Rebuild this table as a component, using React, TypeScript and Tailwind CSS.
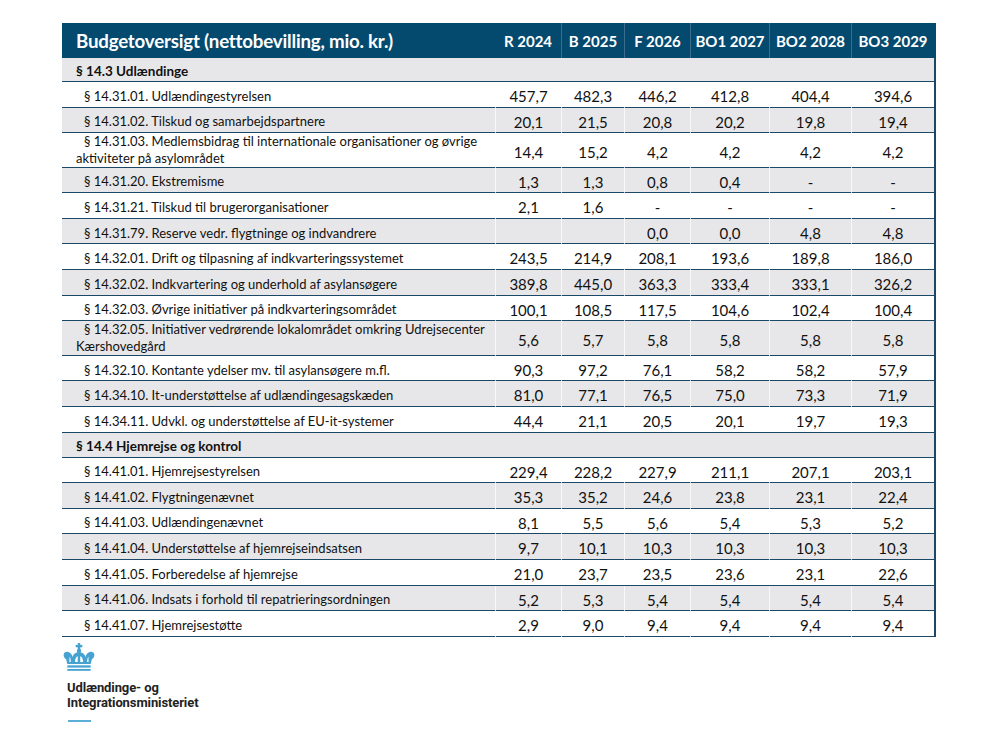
import React from 'react';

type Row =
  | { kind: 'section'; label: string }
  | { kind: 'item'; lines: string[]; values: string[] };

const rows: Row[] = [
  { kind: 'section', label: '§ 14.3 Udlændinge' },
  { kind: 'item', lines: ['§ 14.31.01. Udlændingestyrelsen'], values: ['457,7', '482,3', '446,2', '412,8', '404,4', '394,6'] },
  { kind: 'item', lines: ['§ 14.31.02. Tilskud og samarbejdspartnere'], values: ['20,1', '21,5', '20,8', '20,2', '19,8', '19,4'] },
  {
    kind: 'item',
    lines: ['§ 14.31.03. Medlemsbidrag til internationale organisationer og øvrige', 'aktiviteter på asylområdet'],
    values: ['14,4', '15,2', '4,2', '4,2', '4,2', '4,2'],
  },
  { kind: 'item', lines: ['§ 14.31.20. Ekstremisme'], values: ['1,3', '1,3', '0,8', '0,4', '-', '-'] },
  { kind: 'item', lines: ['§ 14.31.21. Tilskud til brugerorganisationer'], values: ['2,1', '1,6', '-', '-', '-', '-'] },
  { kind: 'item', lines: ['§ 14.31.79. Reserve vedr. flygtninge og indvandrere'], values: ['', '', '0,0', '0,0', '4,8', '4,8'] },
  { kind: 'item', lines: ['§ 14.32.01. Drift og tilpasning af indkvarteringssystemet'], values: ['243,5', '214,9', '208,1', '193,6', '189,8', '186,0'] },
  { kind: 'item', lines: ['§ 14.32.02. Indkvartering og underhold af asylansøgere'], values: ['389,8', '445,0', '363,3', '333,4', '333,1', '326,2'] },
  { kind: 'item', lines: ['§ 14.32.03. Øvrige initiativer på indkvarteringsområdet'], values: ['100,1', '108,5', '117,5', '104,6', '102,4', '100,4'] },
  {
    kind: 'item',
    lines: ['§ 14.32.05. Initiativer vedrørende lokalområdet omkring Udrejsecenter', 'Kærshovedgård'],
    values: ['5,6', '5,7', '5,8', '5,8', '5,8', '5,8'],
  },
  { kind: 'item', lines: ['§ 14.32.10. Kontante ydelser mv. til asylansøgere m.fl.'], values: ['90,3', '97,2', '76,1', '58,2', '58,2', '57,9'] },
  { kind: 'item', lines: ['§ 14.34.10. It-understøttelse af udlændingesagskæden'], values: ['81,0', '77,1', '76,5', '75,0', '73,3', '71,9'] },
  { kind: 'item', lines: ['§ 14.34.11. Udvkl. og understøttelse af EU-it-systemer'], values: ['44,4', '21,1', '20,5', '20,1', '19,7', '19,3'] },
  { kind: 'section', label: '§ 14.4 Hjemrejse og kontrol' },
  { kind: 'item', lines: ['§ 14.41.01. Hjemrejsestyrelsen'], values: ['229,4', '228,2', '227,9', '211,1', '207,1', '203,1'] },
  { kind: 'item', lines: ['§ 14.41.02. Flygtningenævnet'], values: ['35,3', '35,2', '24,6', '23,8', '23,1', '22,4'] },
  { kind: 'item', lines: ['§ 14.41.03. Udlændingenævnet'], values: ['8,1', '5,5', '5,6', '5,4', '5,3', '5,2'] },
  { kind: 'item', lines: ['§ 14.41.04. Understøttelse af hjemrejseindsatsen'], values: ['9,7', '10,1', '10,3', '10,3', '10,3', '10,3'] },
  { kind: 'item', lines: ['§ 14.41.05. Forberedelse af hjemrejse'], values: ['21,0', '23,7', '23,5', '23,6', '23,1', '22,6'] },
  { kind: 'item', lines: ['§ 14.41.06. Indsats i forhold til repatrieringsordningen'], values: ['5,2', '5,3', '5,4', '5,4', '5,4', '5,4'] },
  { kind: 'item', lines: ['§ 14.41.07. Hjemrejsestøtte'], values: ['2,9', '9,0', '9,4', '9,4', '9,4', '9,4'] },
];

const years = ['R 2024', 'B 2025', 'F 2026', 'BO1 2027', 'BO2 2028', 'BO3 2029'];
const cols = 'grid grid-cols-[433px_66px_63px_66px_79px_82px_83px]';

const Crown = () => (
  <svg width="32" height="29" viewBox="0 0 31 28" className="text-[#46a3d1]" fill="currentColor">
    <rect x="14.3" y="0" width="2.4" height="6.5" />
    <rect x="12.3" y="1.8" width="6.4" height="2.3" />
    <circle cx="15.5" cy="7.6" r="2.1" />
    <path
      fillRule="evenodd"
      d="M0.6 11.5 C0.6 9.2 3 8 5 8.6 C7.6 9.4 8.8 11.6 9.3 13.6 C9.8 10.8 12.2 9 15.5 9 C18.8 9 21.2 10.8 21.7 13.6 C22.2 11.6 23.4 9.4 26 8.6 C28 8 30.4 9.2 30.4 11.5 C30.4 13.1 29.4 14.7 28 15.7 L26.8 20.2 L4.2 20.2 L3 15.7 C1.6 14.7 0.6 13.1 0.6 11.5 Z M6.4 13.2 C7.2 14 7.5 15.6 7.6 18.4 L6.2 18.4 Z M24.6 13.2 C23.8 14 23.5 15.6 23.4 18.4 L24.8 18.4 Z M11.6 18.4 C11.6 15.2 12.8 13.2 14.3 12.9 L14.3 18.4 Z M19.4 18.4 C19.4 15.2 18.2 13.2 16.7 12.9 L16.7 18.4 Z"
    />
    <rect x="4.2" y="21.6" width="22.6" height="2.2" />
    <rect x="4.2" y="25.1" width="22.6" height="1.8" />
  </svg>
);

export default function App() {
  return (
    <div className="min-h-[750px] w-[1000px] bg-white pt-[23px] pl-[62px]" style={{ fontFamily: 'Lato, "Open Sans", sans-serif' }}>
      <div className="w-[874px] text-[#111]">
        <div className={`${cols} h-[35px] bg-[#044a6f] text-white font-bold`}>
          <div className="flex items-center pl-[14px] pt-[2px] text-[18.7px] tracking-[-0.2px]">Budgetoversigt (nettobevilling, mio. kr.)</div>
          {years.map((y, i) => (
            <div
              key={y}
              className={`flex items-center justify-center pt-[2px] text-[15px] ${i === 0 ? '' : 'border-l border-[#3d6d8c]'}`}
            >
              {y}
            </div>
          ))}
        </div>
        <div className="border-x-2 border-[#1c4868]">
          {rows.map((row, idx) => {
            const odd = idx % 2 === 0;
            const bg = odd ? 'bg-[#e7e7e9]' : 'bg-white';
            if (row.kind === 'section') {
              return (
                <div
                  key={idx}
                  className={`${cols} ${bg} ${idx === 0 ? 'h-[24px]' : 'h-[25px]'} border-b border-[#1c4868] -ml-[2px]`}
                >
                  <div className="flex items-center pl-[14px] pt-[3px] text-[13.5px] font-bold">{row.label}</div>
                </div>
              );
            }
            const double = row.lines.length > 1;
            return (
              <div
                key={idx}
                className={`${cols} ${bg} ${double ? 'h-[34.5px]' : 'h-[25.6px]'} border-b border-[#1c4868] -ml-[2px]`}
              >
                <div className={`flex flex-col justify-center pl-[14px] text-[13px] leading-[17px] ${double ? 'pb-[1px]' : 'pt-[3px]'}`}>
                  {row.lines.map((l, j) => (
                    <span key={j} className={`whitespace-nowrap ${j === 0 ? 'pl-[8px]' : ''}`}>
                      {l}
                    </span>
                  ))}
                </div>
                {row.values.map((v, j) => (
                  <div key={j} className="flex items-center justify-center border-l border-white/70 pt-[3px] text-[15px]">
                    {v}
                  </div>
                ))}
              </div>
            );
          })}
        </div>
      </div>
      <div className="mt-[6px] pl-[1px]">
        <Crown />
        <div className="mt-[8px] pl-[4px] text-[13px] font-bold leading-[15.5px] text-[#222] tracking-[-0.1px]" style={{ fontFamily: 'Roboto, "Open Sans", sans-serif' }}>
          <div>Udlændinge- og</div>
          <div>Integrationsministeriet</div>
        </div>
        <div className="ml-[5px] mt-[9px] h-[2px] w-[23px] bg-[#5aaed8]" />
      </div>
    </div>
  );
}
